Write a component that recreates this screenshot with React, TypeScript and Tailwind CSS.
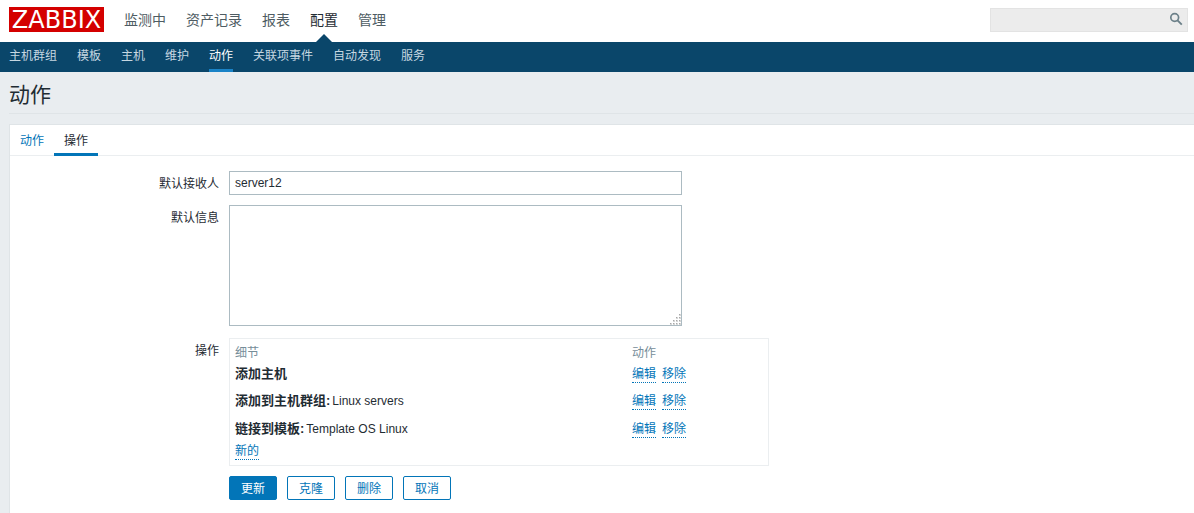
import type { ReactNode } from 'react';

const mainMenu = ['监测中', '资产记录', '报表', '配置', '管理'];
const subMenu = ['主机群组', '模板', '主机', '维护', '动作', '关联项事件', '自动发现', '服务'];
const operations = [
  { title: '添加主机', value: '', height: 'h-[27px]' },
  { title: '添加到主机群组:', value: 'Linux servers', height: 'h-7' },
  { title: '链接到模板:', value: 'Template OS Linux', height: 'h-[25px]' },
];

function DottedLink({ children }: { children: ReactNode }) {
  return (
    <a href="#" className="block h-[17px] w-fit border-b border-dotted border-[#0275b8] leading-4 text-[#0275b8]">
      {children}
    </a>
  );
}

function FormButton({ children, primary = false }: { children: ReactNode; primary?: boolean }) {
  const tone = primary ? 'bg-[#0275b8] text-white' : 'bg-white text-[#0275b8]';
  return (
    <button type="button" className={`h-6 rounded-xs border border-[#0275b8] px-[11px] pt-[2px] leading-5 ${tone}`}>
      {children}
    </button>
  );
}

function ResizeGrip() {
  const dots: [number, number][] = [];
  for (let row = 0; row < 4; row++) {
    for (let col = 3 - row; col < 4; col++) dots.push([col * 3, row * 3]);
  }
  return (
    <svg className="pointer-events-none absolute right-px bottom-px" width="11" height="11" viewBox="0 0 11 11" shapeRendering="crispEdges" aria-hidden="true">
      {dots.map(([x, y]) => (
        <g key={`${x}-${y}`}>
          <rect x={x} y={y} width="2" height="2" fill="#d6d6d6" />
          <rect x={x} y={y} width="1" height="1" fill="#a8a8a8" />
        </g>
      ))}
    </svg>
  );
}

export default function App() {
  return (
    <div className="flex min-h-screen flex-col bg-[#e9edf0] font-['Liberation_Sans','Noto_Sans_CJK_SC',sans-serif] text-xs text-[#1f2c33]">
      <header>
        <div className="flex h-[42px] items-start justify-between bg-white pr-[6px] pl-[9px]">
          <div className="flex">
            <a href="#" className="mt-[7px] flex h-[25px] w-[95px] items-center justify-center bg-[#d40000] font-['DejaVu_Sans',sans-serif] text-2xl leading-6 text-white">
              ZABBIX
            </a>
            <nav className="ml-5 flex gap-5 text-sm">
              {mainMenu.map((item) => (
                <a key={item} href="#" className={`relative flex h-[42px] justify-center pt-[10px] leading-5 ${item === '配置' ? 'text-[#1f2c33]' : 'text-[#4e5c63]'}`}>
                  {item}
                  {item === '配置' && (
                    <svg className="absolute bottom-0" width="16" height="8" viewBox="0 0 16 8" aria-hidden="true">
                      <path d="M0 8 8 0l8 8z" fill="#0a466a" />
                    </svg>
                  )}
                </a>
              ))}
            </nav>
          </div>
          <form className="relative mt-2" role="search">
            <input type="search" aria-label="搜索" className="block h-6 w-[198px] border border-[#e3e3e3] bg-[#ececec] pr-7 pl-1 outline-none" />
            <button type="button" aria-label="搜索" className="absolute top-1 right-[5px]">
              <svg width="14" height="14" viewBox="0 0 14 14" fill="none" stroke="#6c8089" aria-hidden="true">
                <circle cx="5.7" cy="5.5" r="3.9" strokeWidth="1.7" />
                <path d="m8.5 8.3 4.3 4.3" strokeWidth="1.9" />
              </svg>
            </button>
          </form>
        </div>
        <nav className="flex h-[30px] gap-5 bg-[#0a466a] pl-[9px] leading-[25px]">
          {subMenu.map((item) => (
            <a key={item} href="#" className={`border-b-3 pt-[2px] ${item === '动作' ? 'border-[#1a83c7] text-white' : 'border-transparent text-[#c6d7e1]'}`}>
              {item}
            </a>
          ))}
        </nav>
      </header>
      <main className="flex grow flex-col pl-[9px]">
        <h1 className="h-[42px] border-b border-[#dfe4e7] pt-2 text-[21px] leading-[30px]">动作</h1>
        <section className="mt-[10px] grow border-t border-l border-[#dfe4e7] bg-white">
          <div role="tablist" className="flex h-[31px] border-b border-[#ebeef0]">
            <button type="button" role="tab" className="h-[31px] px-[10px] text-[#0275b8]">动作</button>
            <button type="button" role="tab" aria-selected="true" className="h-[31px] border-b-3 border-[#0275b8] px-[10px] pt-[3px]">操作</button>
          </div>
          <form className="grid grid-cols-[209px_1fr] gap-x-[10px] pt-[15px]">
            <label htmlFor="recipient" className="pt-px text-right leading-6">默认接收人</label>
            <input id="recipient" defaultValue="server12" className="h-6 w-[453px] self-start border border-[#acbbc2] bg-white px-[5px] outline-none" />

            <label htmlFor="message" className="mt-[9px] pt-px text-right leading-6">默认信息</label>
            <div className="relative mt-[9px] w-[453px]">
              <textarea id="message" className="block h-[121px] w-full resize-none border border-[#acbbc2] bg-white p-[5px] outline-none" />
              <ResizeGrip />
            </div>

            <div className="mt-3 pt-px text-right leading-6">操作</div>
            <div className="mt-3 w-[540px] border border-[#ebeef0] pt-[2px] pb-[5px]">
              <table className="w-full table-fixed text-left">
                <thead>
                  <tr className="h-[22px] text-[#768d99]">
                    <th className="w-[397px] pt-[2px] pl-[5px] font-normal">细节</th>
                    <th className="pt-[2px] pl-[5px] font-normal">动作</th>
                  </tr>
                </thead>
                <tbody className="align-top">
                  {operations.map((op) => (
                    <tr key={op.title} className={op.height}>
                      <td className="pt-[3px] pl-[5px]">
                        <div className="flex items-baseline gap-[2px] leading-4">
                          <b className="text-[13px] leading-4">{op.title}</b>
                          <span>{op.value}</span>
                        </div>
                      </td>
                      <td className="pt-[3px] pl-[5px]">
                        <div className="flex gap-[6px]">
                          <DottedLink>编辑</DottedLink>
                          <DottedLink>移除</DottedLink>
                        </div>
                      </td>
                    </tr>
                  ))}
                  <tr>
                    <td colSpan={2} className="pl-[5px]">
                      <DottedLink>新的</DottedLink>
                    </td>
                  </tr>
                </tbody>
              </table>
            </div>

            <div className="col-start-2 mt-[10px] flex gap-[10px]">
              <FormButton primary>更新</FormButton>
              <FormButton>克隆</FormButton>
              <FormButton>删除</FormButton>
              <FormButton>取消</FormButton>
            </div>
          </form>
        </section>
      </main>
    </div>
  );
}
